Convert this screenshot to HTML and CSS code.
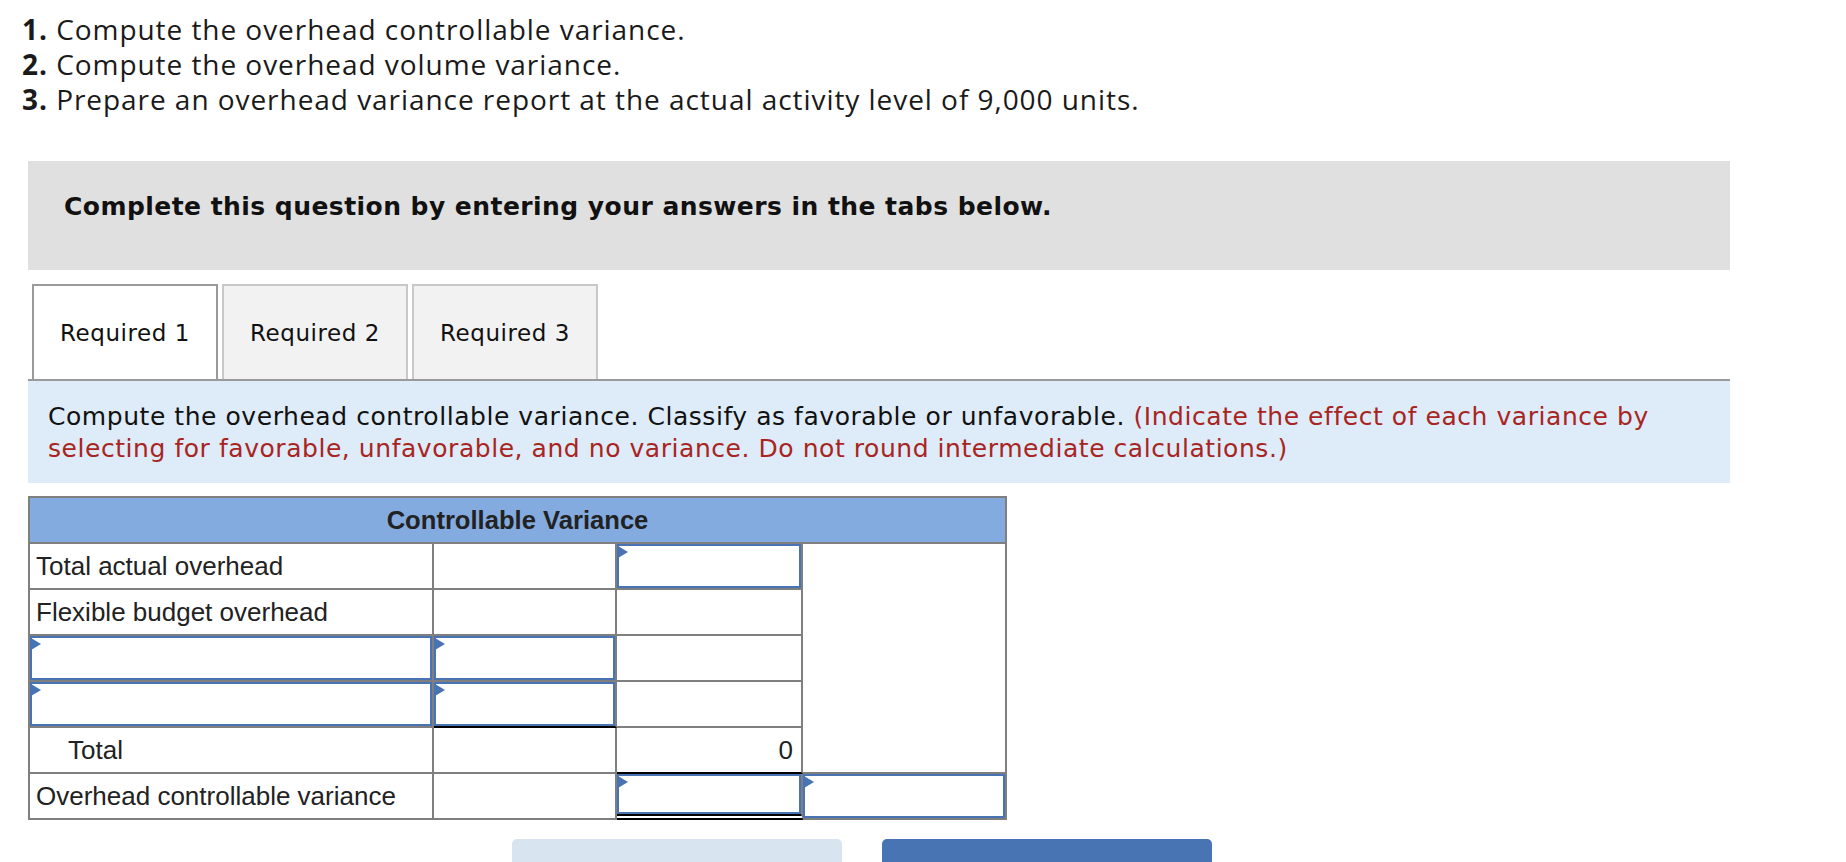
FILE: index.html
```html
<!DOCTYPE html>
<html>
<head>
<meta charset="utf-8">
<title>Overhead variance</title>
<link rel="stylesheet" href="styles.css">
</head>
<body>
<div class="tasks">
  <p><b>1.</b> Compute the overhead controllable variance.</p>
  <p><b>2.</b> Compute the overhead volume variance.</p>
  <p><b>3.</b> Prepare an overhead variance report at the actual activity level of 9,000 units.</p>
</div>
<div class="block notice">Complete this question by entering your answers in the tabs below.</div>
<div class="block tabs">
  <div class="tab active">Required 1</div>
  <div class="tab">Required 2</div>
  <div class="tab">Required 3</div>
</div>
<div class="block prompt">Compute the overhead controllable variance. Classify as favorable or unfavorable. <span class="hint">(Indicate the effect of each variance by<br>selecting for favorable, unfavorable, and no variance. Do not round intermediate calculations.)</span></div>
<div class="block sheet">
  <div class="hd">Controllable Variance</div>

  <div class="c lbl">Total actual overhead</div>
  <div class="c"></div>
  <div class="c in"><div class="inp"></div></div>
  <div class="c side"></div>

  <div class="c lbl">Flexible budget overhead</div>
  <div class="c"></div>
  <div class="c"></div>

  <div class="c in"><div class="inp"></div></div>
  <div class="c in"><div class="inp"></div></div>
  <div class="c"></div>

  <div class="c in"><div class="inp"></div></div>
  <div class="c in under"><div class="inp"></div></div>
  <div class="c"></div>

  <div class="c lbl indent">Total</div>
  <div class="c"></div>
  <div class="c num under">0</div>

  <div class="c lbl">Overhead controllable variance</div>
  <div class="c"></div>
  <div class="c in dbl"><div class="inp"></div></div>
  <div class="c in"><div class="inp"></div></div>
</div>
<div class="block actions">
  <div class="btn light"></div>
  <div class="btn dark"></div>
</div>
</body>
</html>
```
FILE: styles.css
```css
html, body {
  margin: 0;
  padding: 0;
  background: #ffffff;
}
body {
  overflow: hidden;
}
.tasks {
  padding: 12px 0 0 22px;
  font-family: "Open Sans", "Lato", sans-serif;
  font-size: 28px;
  letter-spacing: 0.95px;
  line-height: 35px;
  color: #1a1a1a;
}
.tasks p {
  margin: 0;
}
.tasks b {
  font-weight: 700;
}
.block {
  margin-left: 28px;
  width: 1702px;
  box-sizing: border-box;
}
.notice {
  margin-top: 44px;
  background: #e0e0e0;
  padding: 32px 36px 49px;
  font-family: "DejaVu Sans", Verdana, sans-serif;
  font-weight: bold;
  font-size: 25px;
  letter-spacing: 0.45px;
  line-height: 28px;
  color: #111;
}
.tabs {
  margin-top: 14px;
  display: flex;
  gap: 4px;
  padding-left: 4px;
  border-bottom: 2px solid #9a9a9a;
}
.tab {
  width: 186px;
  height: 95px;
  box-sizing: border-box;
  display: flex;
  align-items: center;
  justify-content: center;
  background: #f2f2f2;
  border: 2px solid #c8c8c8;
  border-bottom: none;
  font-family: "DejaVu Sans", Verdana, sans-serif;
  font-size: 23px;
  letter-spacing: 0.55px;
  color: #111;
}
.tab.active {
  background: #ffffff;
  border-color: #9a9a9a;
}
.prompt {
  background: #deebf8;
  padding: 20px 20px 18px 20px;
  font-family: "DejaVu Sans", Verdana, sans-serif;
  font-size: 25px;
  letter-spacing: 0.55px;
  line-height: 32px;
  color: #111;
}
.hint {
  color: #a8251f;
}
.sheet {
  margin-top: 13px;
  width: 979px;
  display: grid;
  grid-template-columns: 404px 183px 186px 204px;
  grid-auto-rows: 46px;
  border-left: 2px solid #7f7f7f;
  border-top: 2px solid #7f7f7f;
  font-family: "Liberation Sans", Arial, sans-serif;
  color: #222;
}
.hd {
  grid-column: 1 / -1;
  background: #84abdf;
  border-right: 2px solid #7f7f7f;
  border-bottom: 2px solid #7f7f7f;
  display: flex;
  align-items: center;
  justify-content: center;
  font-weight: bold;
  font-size: 25.6px;
}
.c {
  box-sizing: border-box;
  border-right: 2px solid #7f7f7f;
  border-bottom: 2px solid #7f7f7f;
  font-size: 26px;
  display: flex;
  align-items: center;
  min-width: 0;
}
.lbl {
  padding-left: 6px;
}
.indent {
  padding-left: 38px;
}
.num {
  justify-content: flex-end;
  padding-right: 8px;
}
.side {
  grid-column: 4;
  grid-row: 2 / span 5;
}
.in {
  align-items: stretch;
}
.inp {
  flex: 1;
  position: relative;
  border: 2px solid #4874b4;
  background: #fff;
}
.inp::before {
  content: "";
  position: absolute;
  left: -1px;
  top: 0;
  border-left: 10px solid #4874b4;
  border-top: 6px solid transparent;
  border-bottom: 6px solid transparent;
}
.under {
  border-bottom-color: #000;
}
.dbl {
  border-bottom: 6px double #000;
}
.actions {
  margin-top: 19px;
  display: flex;
  gap: 40px;
  padding-left: 484px;
}
.btn {
  width: 330px;
  height: 40px;
  border-radius: 5px 5px 0 0;
}
.btn.light {
  background: #d9e4f1;
}
.btn.dark {
  background: #4874b4;
}
```
